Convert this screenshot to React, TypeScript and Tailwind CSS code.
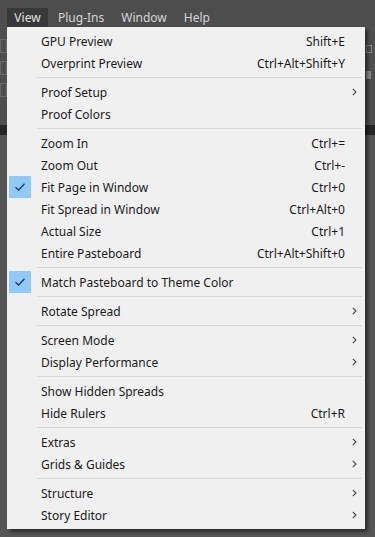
import React from "react";

type Item =
  | { type: "sep" }
  | { type: "item"; label: string; shortcut?: string; sub?: boolean; checked?: boolean };

const items: Item[] = [
  { type: "item", label: "GPU Preview", shortcut: "Shift+E" },
  { type: "item", label: "Overprint Preview", shortcut: "Ctrl+Alt+Shift+Y" },
  { type: "sep" },
  { type: "item", label: "Proof Setup", sub: true },
  { type: "item", label: "Proof Colors" },
  { type: "sep" },
  { type: "item", label: "Zoom In", shortcut: "Ctrl+=" },
  { type: "item", label: "Zoom Out", shortcut: "Ctrl+-" },
  { type: "item", label: "Fit Page in Window", shortcut: "Ctrl+0", checked: true },
  { type: "item", label: "Fit Spread in Window", shortcut: "Ctrl+Alt+0" },
  { type: "item", label: "Actual Size", shortcut: "Ctrl+1" },
  { type: "item", label: "Entire Pasteboard", shortcut: "Ctrl+Alt+Shift+0" },
  { type: "sep" },
  { type: "item", label: "Match Pasteboard to Theme Color", checked: true },
  { type: "sep" },
  { type: "item", label: "Rotate Spread", sub: true },
  { type: "sep" },
  { type: "item", label: "Screen Mode", sub: true },
  { type: "item", label: "Display Performance", sub: true },
  { type: "sep" },
  { type: "item", label: "Show Hidden Spreads" },
  { type: "item", label: "Hide Rulers", shortcut: "Ctrl+R" },
  { type: "sep" },
  { type: "item", label: "Extras", sub: true },
  { type: "item", label: "Grids & Guides", sub: true },
  { type: "sep" },
  { type: "item", label: "Structure", sub: true },
  { type: "item", label: "Story Editor", sub: true },
];

const font = { fontFamily: '"Noto Sans", "Open Sans", sans-serif' };

function Chevron() {
  return (
    <svg width="5" height="8" viewBox="0 0 5 8" className="block">
      <path d="M0.8 0.8 L4 4 L0.8 7.2" fill="none" stroke="#444" strokeWidth="1.1" />
    </svg>
  );
}

function Check() {
  return (
    <svg width="12" height="10" viewBox="0 0 12 10" className="block">
      <path d="M1.5 5.2 L4.6 8 L10.5 1.8" fill="none" stroke="#1f3a55" strokeWidth="1.3" />
    </svg>
  );
}

export default function App() {
  return (
    <div
      className="relative w-[375px] h-[537px] overflow-hidden bg-[#555555] text-[12px]"
      style={font}
    >
      {/* menu bar */}
      <div className="flex h-[27px] items-end bg-[#4d4d4d] pl-[7px] text-[#d6d6d6]">
        <div className="flex h-[19px] w-[41px] items-center justify-center bg-[#383838] text-[#e2e2e2]">
          View
        </div>
        <div className="flex h-[19px] items-center pl-[10px]">Plug-Ins</div>
        <div className="flex h-[19px] items-center pl-[17px]">Window</div>
        <div className="flex h-[19px] items-center pl-[17px]">Help</div>
      </div>
      {/* background workspace */}
      <div className="flex flex-col">
        <div className="flex h-[98px] justify-between bg-[#4f4f4f]">
          <div className="mt-[12px] flex w-[7px] flex-col gap-[8px]">
            <div className="h-[14px] border border-[#6a6a6a]" />
            <div className="h-[14px] border border-[#6a6a6a]" />
            <div className="h-[14px] border border-[#6a6a6a]" />
          </div>
          <div className="mt-[18px] flex w-[9px] flex-col gap-[18px]">
            <div className="h-[8px] w-[6px] border border-[#8a8a8a]" />
            <div className="h-[8px] w-[5px] bg-[#8a8a8a]" />
          </div>
        </div>
        <div className="h-[10px] bg-[#262626]" />
        <div className="h-[402px] bg-[#555555]" />
      </div>

      {/* dropdown menu */}
      <div className="absolute left-[7px] top-[27px] w-[358px] bg-[#f0f0f0] py-[3px] text-[#1a1a1a] shadow-[3px_3px_3px_rgba(0,0,0,0.45)]">
        {items.map((it, i) =>
          it.type === "sep" ? (
            <div key={i} className="flex h-[7px] items-center pl-[30px] pr-[3px]">
              <div className="h-px w-full bg-[#d7d7d7]" />
            </div>
          ) : (
            <div key={i} className="flex h-[22px] items-center">
              <div className="flex w-[34px] items-center pl-[2px]">
                {it.checked ? (
                  <div className="flex h-[22px] w-[22px] items-center justify-center bg-[#90c8f6]">
                    <Check />
                  </div>
                ) : null}
              </div>
              <div className="flex-1 whitespace-nowrap pt-[2px]">{it.label}</div>
              <div className="whitespace-nowrap pt-[2px]">{it.shortcut}</div>
              <div className="flex w-[20px] justify-start pl-[7px]">{it.sub ? <Chevron /> : null}</div>
            </div>
          )
        )}
      </div>
    </div>
  );
}
